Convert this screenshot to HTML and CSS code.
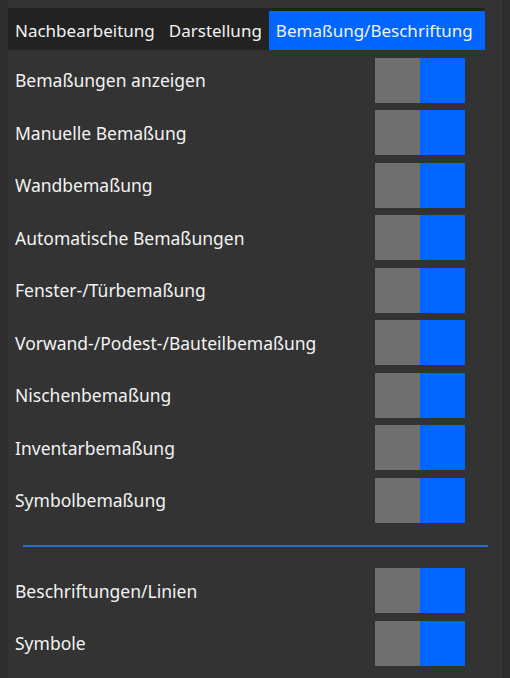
FILE: index.html
```html
<!DOCTYPE html>
<html lang="de">
<head>
<meta charset="utf-8">
<link rel="stylesheet" href="styles.css">
</head>
<body>
<div class="frame">
  <div class="panel">
    <div class="tabs">
      <div class="tab">Nachbearbeitung</div>
      <div class="tab">Darstellung</div>
      <div class="tab active">Bemaßung/Beschriftung</div>
    </div>
    <div class="list first">
      <div class="row"><span class="label">Bemaßungen anzeigen</span><span class="toggle"><i class="off"></i><i class="on"></i></span></div>
      <div class="row"><span class="label">Manuelle Bemaßung</span><span class="toggle"><i class="off"></i><i class="on"></i></span></div>
      <div class="row"><span class="label">Wandbemaßung</span><span class="toggle"><i class="off"></i><i class="on"></i></span></div>
      <div class="row"><span class="label">Automatische Bemaßungen</span><span class="toggle"><i class="off"></i><i class="on"></i></span></div>
      <div class="row"><span class="label">Fenster-/Türbemaßung</span><span class="toggle"><i class="off"></i><i class="on"></i></span></div>
      <div class="row"><span class="label">Vorwand-/Podest-/Bauteilbemaßung</span><span class="toggle"><i class="off"></i><i class="on"></i></span></div>
      <div class="row"><span class="label">Nischenbemaßung</span><span class="toggle"><i class="off"></i><i class="on"></i></span></div>
      <div class="row"><span class="label">Inventarbemaßung</span><span class="toggle"><i class="off"></i><i class="on"></i></span></div>
      <div class="row"><span class="label">Symbolbemaßung</span><span class="toggle"><i class="off"></i><i class="on"></i></span></div>
    </div>
    <div class="separator"></div>
    <div class="list second">
      <div class="row"><span class="label">Beschriftungen/Linien</span><span class="toggle"><i class="off"></i><i class="on"></i></span></div>
      <div class="row"><span class="label">Symbole</span><span class="toggle"><i class="off"></i><i class="on"></i></span></div>
    </div>
  </div>
</div>
</body>
</html>
```
FILE: styles.css
```css
html, body {
  margin: 0;
  padding: 0;
  height: 100%;
}
body {
  background: #2d2d2d;
  font-family: "Noto Sans", "Open Sans", sans-serif;
  color: #f2f2f2;
  overflow: hidden;
}
.frame {
  height: 678px;
  padding-left: 8px;
  display: flex;
}
.panel {
  width: 494px;
  background: #333333;
  padding-top: 8px;
  box-sizing: border-box;
  border-right: 1px solid #383838;
}
.tabs {
  display: flex;
  align-items: flex-end;
  width: 477px;
  height: 42px;
  background: #222222;
}
.tab {
  height: 39px;
  line-height: 39px;
  padding: 0 7px;
  font-size: 17px;
  white-space: nowrap;
}
.tab.active {
  flex: 1;
  background: #0066ff;
}
.list.first {
  margin-top: 4px;
}
.row {
  height: 52.5px;
  display: flex;
  align-items: center;
  justify-content: space-between;
  padding-left: 7px;
  width: 450px;
}
.label {
  font-size: 17.5px;
  white-space: nowrap;
}
.toggle {
  display: flex;
  width: 90px;
  height: 45px;
}
.toggle i {
  flex: 1;
}
.toggle .off {
  background: #6f6f6f;
}
.toggle .on {
  background: #0066ff;
}
.separator {
  margin: 18px 0 0 15px;
  width: 465px;
  height: 2px;
  background: #2c6bd6;
}
.list.second {
  margin-top: 18px;
}
```
